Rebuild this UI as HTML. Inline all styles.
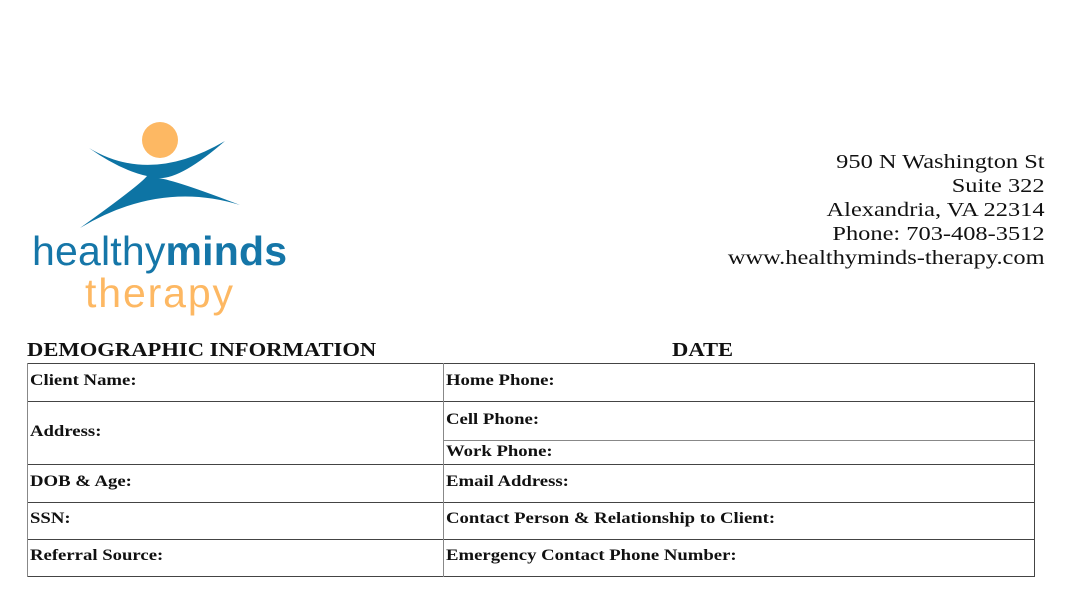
<!DOCTYPE html>
<html><head><style>
body{margin:0;width:1085px;height:595px;background:#fff;position:relative;overflow:hidden;font-family:"Liberation Serif",serif;color:#111}
.a{position:absolute}
.addr{right:40px;text-align:right;font-size:20px;line-height:24px;top:150px;transform:scaleX(1.22);transform-origin:right top}
.l{position:absolute;font-weight:bold;font-size:16px;white-space:nowrap;transform:scaleX(1.17);transform-origin:left top}
.h{position:absolute;background:#444;height:1px}
.v{position:absolute;background:#444;width:1px}
</style></head><body>
<svg class="a" style="left:0;top:0" width="300" height="330">
<circle cx="160" cy="140" r="18" fill="#fdb863"/>
<path d="M89 148 Q150 185 225 141 Q180 180 158 178 Q175 180 240 205 Q160 180 80 228 Q140 185 147 176 Q120 170 89 148Z" fill="#0d74a4"/>
<text x="32" y="265" font-family="Liberation Sans,sans-serif" font-size="41" fill="#1576a8" textLength="255" lengthAdjust="spacing">healthy<tspan font-weight="bold">minds</tspan></text>
<text x="85" y="307" font-family="Liberation Sans,sans-serif" font-size="41" fill="#fdb863" textLength="148" lengthAdjust="spacing">therapy</text>
</svg>
<div class="a addr">950 N Washington St<br>Suite 322<br>Alexandria, VA 22314<br>Phone: 703-408-3512<br>www.healthyminds-therapy.com</div>
<div class="l" style="left:27px;top:339px;font-size:20px;transform:scaleX(1.13)">DEMOGRAPHIC INFORMATION</div>
<div class="l" style="left:672px;top:339px;font-size:20px;transform:scaleX(1.13)">DATE</div>
<div class="h" style="left:27px;width:1008px;top:363px"></div>
<div class="h" style="left:27px;width:1008px;top:401px"></div>
<div class="h" style="left:443px;width:592px;top:440px;background:#888"></div>
<div class="h" style="left:27px;width:1008px;top:464px"></div>
<div class="h" style="left:27px;width:1008px;top:502px"></div>
<div class="h" style="left:27px;width:1008px;top:539px"></div>
<div class="h" style="left:27px;width:1008px;top:576px"></div>
<div class="v" style="left:27px;top:363px;height:214px;background:#888"></div>
<div class="v" style="left:443px;top:363px;height:214px;background:#888"></div>
<div class="v" style="left:1034px;top:363px;height:214px"></div>
<div class="l" style="left:30px;top:372px">Client Name:</div>
<div class="l" style="left:30px;top:423px">Address:</div>
<div class="l" style="left:30px;top:473px">DOB &amp; Age:</div>
<div class="l" style="left:30px;top:510px">SSN:</div>
<div class="l" style="left:30px;top:547px">Referral Source:</div>
<div class="l" style="left:446px;top:372px">Home Phone:</div>
<div class="l" style="left:446px;top:411px">Cell Phone:</div>
<div class="l" style="left:446px;top:443px">Work Phone:</div>
<div class="l" style="left:446px;top:473px">Email Address:</div>
<div class="l" style="left:446px;top:510px">Contact Person &amp; Relationship to Client:</div>
<div class="l" style="left:446px;top:547px">Emergency Contact Phone Number:</div>
</body></html>
